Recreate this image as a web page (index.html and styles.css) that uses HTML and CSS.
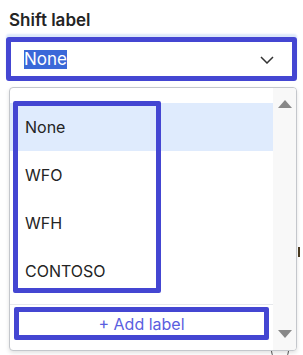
FILE: index.html
```html
<!DOCTYPE html>
<html lang="en">
<head>
<meta charset="utf-8">
<link rel="stylesheet" href="styles.css">
</head>
<body>
<div class="page">
  <div class="label">Shift label</div>
  <div class="select">
    <span class="value">None</span>
    <svg class="chevron" width="14" height="8" viewBox="0 0 14 8"><path d="M1 1l6 6 6-6" fill="none" stroke="#333" stroke-width="1.5"/></svg>
  </div>
  <div class="panel">
    <div class="main">
      <div class="list">
        <div class="row active">None</div>
        <div class="row">WFO</div>
        <div class="row">WFH</div>
        <div class="row">CONTOSO</div>
        <div class="mark-list"></div>
      </div>
      <div class="footer">
        <button class="add">+ Add label</button>
      </div>
    </div>
    <div class="scroll">
      <svg width="14" height="8" viewBox="0 0 14 8"><path d="M7 0L14 8H0Z" fill="#888"/></svg>
      <svg width="14" height="8" viewBox="0 0 14 8"><path d="M0 0H14L7 8Z" fill="#888"/></svg>
    </div>
  </div>
  <div class="under-circle"></div>
  <div class="under-text"></div>
</div>
</body>
</html>
```

FILE: styles.css
```css
* { box-sizing: border-box; }
html, body { margin: 0; padding: 0; background: #fff; }
body { font-family: Inter, "Noto Sans", sans-serif; color: #242424; }
.page { position: relative; width: 303px; height: 355px; overflow: hidden; }
.label {
  font-size: 17px; line-height: 20px; font-weight: 600;
  padding: 10px 0 0 9px; color: #242424;
}
.select {
  margin: 7px 0 0 6px; width: 291px; height: 44px;
  border: 5px solid #4446d2; border-radius: 3px;
  display: flex; align-items: center; justify-content: space-between;
  padding: 0 18px 0 13px; background: #fff;
  box-shadow: 0 -3px 2px #dce8fa;
}
.value {
  font-size: 17px; line-height: 19px; background: #3a68d8; color: #fff;
  padding: 0;
}
.chevron { margin-top: 1px; }
.panel {
  position: relative; z-index: 2;
  margin: 6px 0 0 9px; width: 288px; height: 264px;
  border: 1px solid #c4c7cc; border-radius: 4px; background: #fff;
  box-shadow: 0 2px 4px rgba(0,0,0,0.12);
  display: flex; overflow: hidden;
}
.main { flex: 1; display: flex; flex-direction: column; }
.list { position: relative; padding-top: 15px; flex: 1; }
.row {
  height: 48px; display: flex; align-items: center;
  padding-left: 15px; font-size: 16px; color: #242424;
}
.row.active { background: #dfebfd; }
.mark-list {
  position: absolute; left: 3px; top: 13px; width: 148px; height: 192px;
  border: 5px solid #4446d2; border-radius: 2px;
}
.footer { border-top: 1px solid #e6e8ec; padding: 2px 0 10px 4px; }
.add {
  display: block; width: 255px; height: 33px;
  border: 5px solid #4446d2; border-radius: 2px; background: #fff;
  font-family: Inter, "Noto Sans", sans-serif; font-size: 16px; color: #5a5ee0;
  padding: 0; text-align: center;
}
.scroll {
  width: 23px; background: #f8f8f8;
  display: flex; flex-direction: column; justify-content: space-between; align-items: center;
  padding: 12px 0 12px 0;
}
.under-circle {
  position: absolute; left: 271px; top: 342px; width: 18px; height: 18px;
  border: 1.5px solid #555; border-radius: 50%; z-index: 1;
}
.under-text {
  position: absolute; left: 298px; top: 247px; width: 2px; height: 10px;
  background: #4a3a20; z-index: 1;
}
```
